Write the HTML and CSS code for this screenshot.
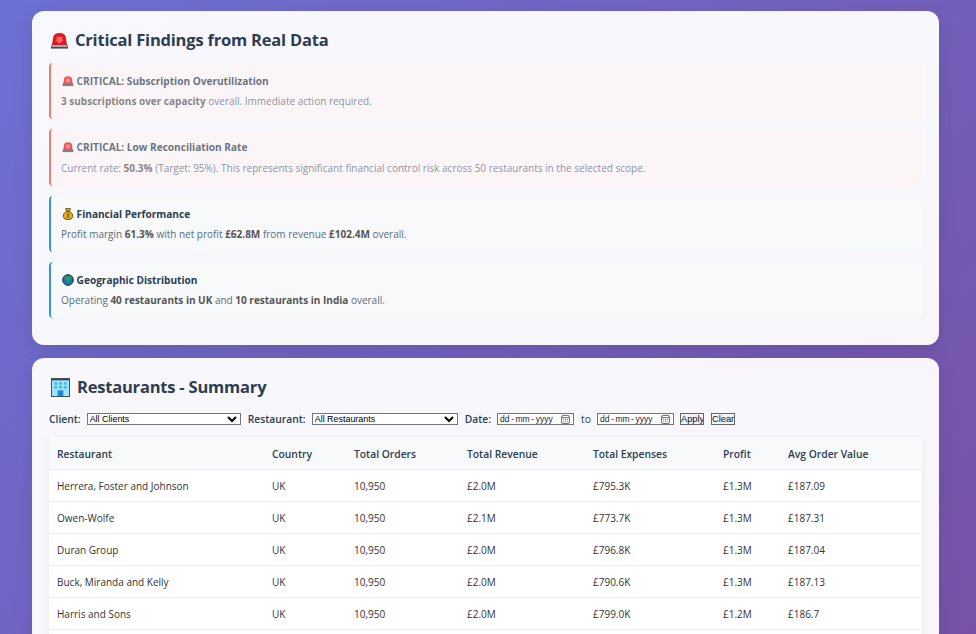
FILE: index.html
```html
<!DOCTYPE html>
<html lang="en-GB">
<head>
    <meta charset="utf-8">
    <link rel="stylesheet" href="styles.css">
    <title>Restaurants - Summary</title>
</head>
<body>
    <section class="card">
        <h2>
            <svg class="icon-lg" viewBox="0 0 20 20"><path d="M2 15 L3.500 6 Q4.500 2 10 2 Q15.500 2 16.500 6 L18 15Z" fill="#e8141c"/><path d="M7 6 h6 v3.500 h1.500 L10 13.500 L5.500 9.500 H7z" fill="#ff6a68"/><rect x="1" y="14.500" width="18" height="4" fill="#4a4d52"/><rect x="1.500" y="15" width="17" height="1.500" fill="#c9ccd1"/></svg>
            Critical Findings from Real Data
        </h2>
        <div class="alert alert-critical">
            <h4><svg class="icon-sm" viewBox="0 0 20 20"><path d="M2 15 L3.500 6 Q4.500 2 10 2 Q15.500 2 16.500 6 L18 15Z" fill="#e8141c"/><path d="M7 6 h6 v3.500 h1.500 L10 13.500 L5.500 9.500 H7z" fill="#ff6a68"/><rect x="1" y="14.500" width="18" height="4" fill="#4a4d52"/></svg> CRITICAL: Subscription Overutilization</h4>
            <p><strong>3 subscriptions over capacity</strong> overall. Immediate action required.</p>
        </div>
        <div class="alert alert-critical">
            <h4><svg class="icon-sm" viewBox="0 0 20 20"><path d="M2 15 L3.500 6 Q4.500 2 10 2 Q15.500 2 16.500 6 L18 15Z" fill="#e8141c"/><path d="M7 6 h6 v3.500 h1.500 L10 13.500 L5.500 9.500 H7z" fill="#ff6a68"/><rect x="1" y="14.500" width="18" height="4" fill="#4a4d52"/></svg> CRITICAL: Low Reconciliation Rate</h4>
            <p>Current rate: <strong>50.3%</strong> (Target: 95%). This represents significant financial control risk across 50 restaurants in the selected scope.</p>
        </div>
        <div class="alert">
            <h4><svg class="icon-sm" viewBox="0 0 20 20"><path d="M6 1 h8 l-1.500 4.500 Q19 9 18 14.500 Q17 19.500 10 19.500 Q3 19.500 2 14.500 Q1 9 7.500 5.500z" fill="#f0a81c" stroke="#4a3510" stroke-width="1.200"/><path d="M7 5.500 h6" stroke="#4a3510" stroke-width="1.600"/><path d="M12.500 9.500 H9 v3 h2.500 v3 H8 M10 8 v9" fill="none" stroke="#1f9a3a" stroke-width="1.500"/></svg> Financial Performance</h4>
            <p>Profit margin <strong>61.3%</strong> with net profit <strong>£62.8M</strong> from revenue <strong>£102.4M</strong> overall.</p>
        </div>
        <div class="alert">
            <h4><svg class="icon-sm" viewBox="0 0 20 20"><circle cx="10" cy="10" r="9" fill="#1a6fc9" stroke="#16263a" stroke-width="1.400"/><path d="M4.500 6 Q9 2.500 15 4.500 Q17.500 8 12.500 10 L11.500 15.500 L9.500 15.500 L8 10.500 Q4.500 9.500 4.500 6Z" fill="#37a02f"/></svg> Geographic Distribution</h4>
            <p>Operating <strong>40 restaurants in UK</strong> and <strong>10 restaurants in India</strong> overall.</p>
        </div>
    </section>

    <section class="card">
        <h2>
            <svg class="icon-lg icon-building" viewBox="0 0 20 20"><rect x="0.500" y="0.500" width="19" height="19" fill="#9fe3f7" stroke="#44484e"/><rect x="1" y="1" width="18" height="1.500" fill="#44484e"/><g fill="#37b4ef"><rect x="3.500" y="4.500" width="3" height="2.500"/><rect x="8.500" y="4.500" width="3" height="2.500"/><rect x="13.500" y="4.500" width="3" height="2.500"/><rect x="3.500" y="8.500" width="3" height="2.500"/><rect x="8.500" y="8.500" width="3" height="2.500"/><rect x="13.500" y="8.500" width="3" height="2.500"/></g><rect x="7" y="13" width="6" height="6" fill="#1e88d8"/></svg>
            Restaurants - Summary
        </h2>
        <div class="filters">
            <label>Client:</label>
            <select class="select-client"><option>All Clients</option></select>
            <label class="label-gap">Restaurant:</label>
            <select class="select-restaurant"><option>All Restaurants</option></select>
            <label class="label-gap">Date:</label>
            <div class="date-field">
                <span>dd - mm - yyyy</span>
                <svg class="cal" viewBox="0 0 10 10"><rect x="0.500" y="0.500" width="9" height="9" rx="2" fill="none" stroke="#555"/><path d="M1 3 h8" stroke="#555"/><path d="M2.500 5 h1 M4.500 5 h1 M6.500 5 h1 M2.500 7 h1 M4.500 7 h1 M6.500 7 h1" stroke="#555"/></svg>
            </div>
            <span class="to">to</span>
            <div class="date-field">
                <span>dd - mm - yyyy</span>
                <svg class="cal" viewBox="0 0 10 10"><rect x="0.500" y="0.500" width="9" height="9" rx="2" fill="none" stroke="#555"/><path d="M1 3 h8" stroke="#555"/><path d="M2.500 5 h1 M4.500 5 h1 M6.500 5 h1 M2.500 7 h1 M4.500 7 h1 M6.500 7 h1" stroke="#555"/></svg>
            </div>
            <button>Apply</button>
            <button class="btn-clear">Clear</button>
        </div>
        <table>
            <thead>
                <tr>
                    <th class="col-name">Restaurant</th>
                    <th class="col-country">Country</th>
                    <th class="col-orders">Total Orders</th>
                    <th class="col-revenue">Total Revenue</th>
                    <th class="col-expenses">Total Expenses</th>
                    <th class="col-profit">Profit</th>
                    <th>Avg Order Value</th>
                </tr>
            </thead>
            <tbody>
                <tr><td>Herrera, Foster and Johnson</td><td>UK</td><td>10,950</td><td>£2.0M</td><td>£795.3K</td><td>£1.3M</td><td>£187.09</td></tr>
                <tr><td>Owen-Wolfe</td><td>UK</td><td>10,950</td><td>£2.1M</td><td>£773.7K</td><td>£1.3M</td><td>£187.31</td></tr>
                <tr><td>Duran Group</td><td>UK</td><td>10,950</td><td>£2.0M</td><td>£796.8K</td><td>£1.3M</td><td>£187.04</td></tr>
                <tr><td>Buck, Miranda and Kelly</td><td>UK</td><td>10,950</td><td>£2.0M</td><td>£790.6K</td><td>£1.3M</td><td>£187.13</td></tr>
                <tr><td>Harris and Sons</td><td>UK</td><td>10,950</td><td>£2.0M</td><td>£799.0K</td><td>£1.2M</td><td>£186.7</td></tr>
                <tr><td>&nbsp;</td><td></td><td></td><td></td><td></td><td></td><td></td></tr>
            </tbody>
        </table>
    </section>
</body>
</html>
```

FILE: styles.css
```css
html {
    height: 100%;
    overflow: hidden;
}

body {
    font-family: "Open Sans", "Noto Sans", sans-serif;
    background: linear-gradient(135deg, #6d71d5 0%, #7752a8 100%);
    color: #2c3e50;
    margin: 0;
    padding: 11px 37px 0 32px;
    height: 634px;
    box-sizing: border-box;
    overflow: hidden;
}

.card {
    background-color: rgba(255, 255, 255, 0.95);
    border-radius: 12px;
    padding: 18px 17px 27px;
    margin-bottom: 13px;
    box-shadow: 0 5px 20px rgba(0, 0, 0, 0.1);
}

h2 {
    display: flex;
    align-items: center;
    gap: 6px;
    font-size: 16.500px;
    letter-spacing: -0.2px;
    line-height: 22px;
    font-weight: 700;
    margin: 0 0 13px;
    padding: 1px 0 0 1px;
    color: #2c3e50;
    height: 21px;
    box-sizing: border-box;
}

.icon-lg {
    width: 19px;
    height: 19px;
}

.icon-building {
    width: 21px;
}

.icon-sm {
    width: 12px;
    height: 12px;
    margin-left: 1px;
    vertical-align: -2px;
}

.alert {
    background-color: #f8f9fa;
    border-left: 2px solid #3498db;
    border-radius: 4px;
    padding: 9px 10px 9.130px;
    margin-bottom: 10px;
    font-size: 10px;
    line-height: 17px;
    color: #5a6c7d;
}

.alert:last-child {
    margin-bottom: 0;
}

.alert h4 {
    margin: 0 0 3.200px;
    font-size: 10.100px;
    line-height: 18px;
    font-weight: 700;
    color: #2c3e50;
}

.alert p {
    margin: 0;
}

.alert strong {
    color: #555;
}

.alert-critical {
    background-color: #fff5f5;
    border-left-color: #e74c3c;
    opacity: 0.7;
}

.filters {
    display: flex;
    align-items: center;
    gap: 6px;
    font-size: 10.300px;
    font-weight: 600;
    padding-top: 2px;
    margin-bottom: 11px;
}

.filters select {
    font-family: "Liberation Sans", Arial, sans-serif;
    zoom: 0.67;
    margin: 0;
}

.label-gap {
    margin-left: 1px;
}

.select-client {
    width: 230px;
}

.select-restaurant {
    width: 218px;
}

.date-field {
    display: flex;
    align-items: center;
    justify-content: space-between;
    width: 77px;
    height: 12px;
    box-sizing: border-box;
    padding: 0 3px 0 2px;
    border: 1px solid #767676;
    background-color: #ffffff;
    font-family: "Liberation Sans", Arial, sans-serif;
    font-size: 8.500px;
    word-spacing: -0.8px;
    font-weight: 400;
    color: #222;
}

.cal {
    width: 9px;
    height: 9px;
}

.to {
    font-weight: 400;
    padding-left: 1px;
}

.filters button {
    font-family: "Liberation Sans", Arial, sans-serif;
    font-size: 9.300px;
    line-height: 10px;
    width: 24px;
    height: 12px;
    padding: 0;
    margin: 0;
    border: 1px solid #666;
    background-color: #f3f3f8;
    color: #111;
    overflow: hidden;
}

.filters .btn-clear {
    margin-left: 1px;
}

table {
    width: 100%;
    border-collapse: collapse;
    table-layout: fixed;
    background-color: #ffffff;
    box-shadow: 0 1px 6px rgba(0, 0, 0, 0.06);
    font-size: 10px;
}

th, td {
    padding: 1px 8px 0;
    height: 32px;
    box-sizing: border-box;
    text-align: left;
    border-bottom: 1px solid #ecf0f1;
}

td {
    color: #333;
}

th {
    background-color: #f8f9fa;
    font-size: 10.300px;
    font-weight: 600;
}

.col-name { width: 215px; }
.col-country { width: 82px; }
.col-orders { width: 113px; }
.col-revenue { width: 126px; }
.col-expenses { width: 130px; }
.col-profit { width: 65px; }
```
